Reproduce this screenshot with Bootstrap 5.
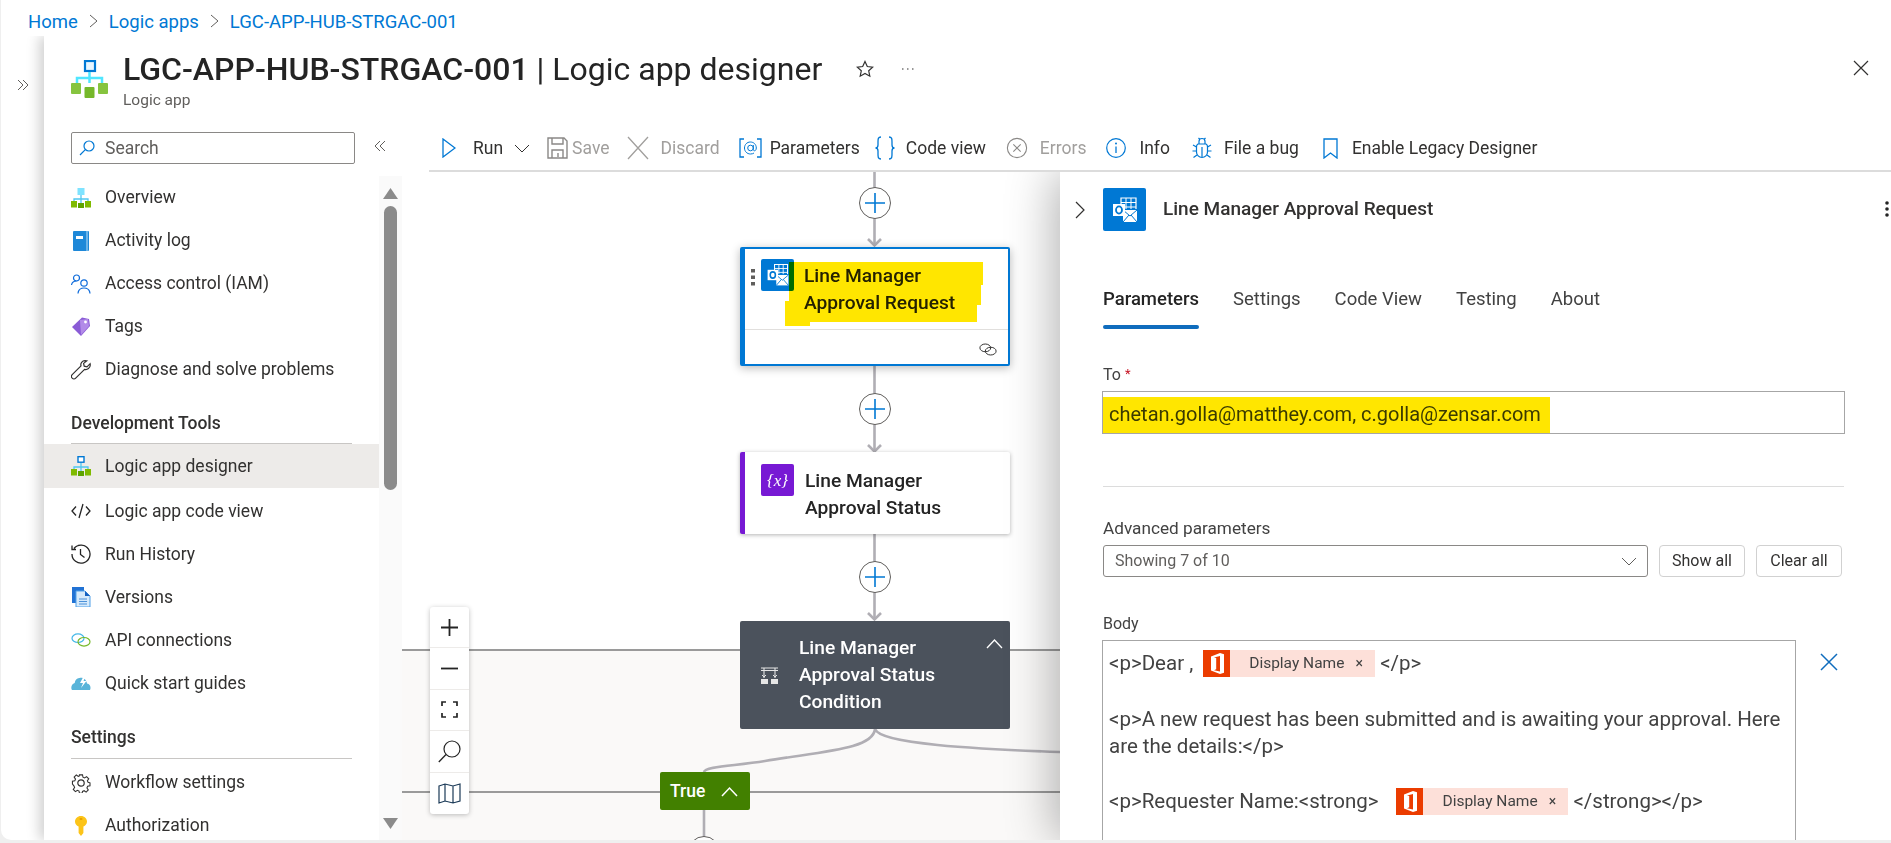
<!DOCTYPE html>
<html lang="en">
<head>
  <title>Logic app designer</title>
  <meta charset="utf-8">
  <meta name="viewport" content="width=device-width, initial-scale=1">
  <link href="https://cdn.jsdelivr.net/npm/bootstrap@5.3.3/dist/css/bootstrap.min.css" rel="stylesheet">
  <script src="https://cdn.jsdelivr.net/npm/bootstrap@5.3.3/dist/js/bootstrap.bundle.min.js"></script>
  <style>
      html, body { height: 100%; overflow: hidden; }
      body { background: #efefef; font-family: Roboto, "Liberation Sans", sans-serif; font-size: 18px; color: #323130; }
      svg { display: block; flex: none; }
      .shell { height: 840px; margin-left: 1px; background: #fff; border-bottom-left-radius: 10px; overflow: hidden; }
      .crumbs { height: 36px; padding-left: 27px; flex: none; }
      .crumbs .breadcrumb { --bs-breadcrumb-divider: url("data:image/svg+xml,%3Csvg xmlns='http://www.w3.org/2000/svg' width='9' height='14'%3E%3Cpath d='M1 1l7 6-7 6' fill='none' stroke='%23605e5c'/%3E%3C/svg%3E"); --bs-breadcrumb-item-padding-x: 11px; font-size: 18.5px; line-height: 44px; margin: 0; }
      .crumbs .breadcrumb-item { display: flex; align-items: center; }
      .crumbs a { color: #0078d4; text-decoration: none; }
      .gutter { width: 43px; flex: none; padding: 43px 0 0 16px; }
      .blade { box-shadow: -5px 0 12px rgba(0,0,0,.18); clip-path: inset(0 0 0 -20px); min-width: 0; }
      .blade-head { height: 96px; flex: none; padding: 24px 22px 0 27px; }
      .head-text { margin-left: 15px; margin-top: -11px; }
      .blade-title { font-size: 32px; line-height: 40px; margin: 0; font-weight: 400; color: #242424; white-space: nowrap; }
      .blade-title b { font-weight: 500; }
      .blade-sub { font-size: 15.5px; line-height: 22px; margin-top: 0; color: #605e5c; }
      .head-star { margin: 0 0 0 34px; }
      .head-dots { margin: 6px 0 0 27px; }
      .head-close { margin: 0 0 0 auto; }
      .side { width: 358px; flex: none; }
      .searchrow { height: 44px; flex: none; padding-left: 27px; }
      .searchbox { width: 284px; position: relative; }
      .searchbox svg { position: absolute; left: 8px; top: 8px; }
      .searchbox input { height: 32px; border: 1px solid #8a8886; border-radius: 2px; padding: 0 0 0 33px; font-size: 17.5px; color: #605e5c; }
      .searchbox input::placeholder { color: #605e5c; opacity: 1; }
      .collapse-ico { margin: 8px 16px 0 auto; }
      .side-menu { width: 335px; flex: none; padding-top: 0; }
      .side-link { height: 43px; flex: none; padding: 0 0 0 27px; gap: 14px; color: #323130; font-size: 17.5px; white-space: nowrap; }
      .side-link:hover { color: #323130; }
      .side-link.current { background: #edebe9; height: 44px; margin-bottom: 1.5px; }
      .side-head { height: 53px; flex: none; margin: 0 27px; padding-top: 21px; border-bottom: 1px solid #c8c6c4; font-size: 17.5px; font-weight: 500; line-height: 22px; }
      .side-head-late { height: 54px; padding-top: 21px; margin-bottom: 2.5px; }
      .scrolltrack { width: 23px; flex: none; background: #fafafa; padding-top: 12px; }
      .thumb { width: 13px; margin: 7px 0 0 5px; height: 284px; background: #8b8b8b; border-radius: 7px; }
      .arrow-up, .arrow-down { width: 15px; height: 11px; margin-left: 4px; background: #8b8b8b; }
      .arrow-up { clip-path: polygon(50% 0, 100% 100%, 0 100%); }
      .arrow-down { clip-path: polygon(0 0, 100% 0, 50% 100%); margin-bottom: 11px; }
      .toolbar { height: 40px; flex: none; margin-left: 27px; padding: 0 0 6px 13px; border-bottom: 2px solid #dcdcdc; font-size: 17.5px; white-space: nowrap; }
      .tool { gap: 9px; color: #323130; }
      .tool.off { color: #a19f9d; }
      .canvas { width: 658px; flex: none; position: relative; overflow: hidden; background: #fff; }
      .scope-bg { position: absolute; left: 0; right: 0; top: 477px; bottom: 0; background: #faf9f8; border-top: 2px solid #9a9a9a; }
      .scope-line { position: absolute; left: 0; right: 0; top: 619px; height: 2px; background: #9a9a9a; }
      .wire { position: absolute; left: 0; top: 0; }
      .add { position: absolute; left: 457px; width: 32px; height: 32px; border-radius: 50%; border: 1px solid #605e5c; background: #fff; display: flex; align-items: center; justify-content: center; }
      .node { position: absolute; left: 338px; width: 270px; background: #fff; box-shadow: 0 1px 4px rgba(0,0,0,.3); border-radius: 2px; font-size: 19.2px; line-height: 27px; color: #242424; }
      .node-title { position: absolute; left: 65px; top: 15px; font-weight: 500; white-space: nowrap; }
      .node-ico { position: absolute; left: 21px; top: 12px; width: 33px; height: 32px; border-radius: 2px; display: flex; align-items: center; justify-content: center; }
      .mail-bg { background: #0078d4; }
      .node-active { top: 75px; height: 119px; border: 2px solid #0078d4; border-left-width: 5px; box-shadow: 0 2px 10px rgba(0,0,0,.28); }
      .node-active .node-ico { left: 16px; top: 10px; }
      .node-active .node-title { left: 59px; top: 13px; }
      .kebab { position: absolute; left: 6px; top: 20px; }
      .node-foot { position: absolute; left: 0; right: 0; top: 80px; border-top: 1px solid #e1dfdd; }
      .link-ico { position: absolute; right: 11px; top: 94px; }
      .marker { position: absolute; left: 383px; top: 90px; width: 204px; height: 64px; background: #ffe600; mix-blend-mode: multiply; clip-path: polygon(4px 0, 198px 0, 198px 23px, 196px 23px, 196px 43px, 192px 43px, 192px 60px, 25px 60px, 25px 64px, 0 64px, 0 39px, 4px 39px); }
      .node-var { top: 280px; height: 82px; border-left: 5px solid #7719d4; }
      .node-var .node-ico { left: 16px; }
      .node-var .node-title { left: 60px; }
      .var-bg { background: #7719d4; color: #fff; font-family: "Liberation Serif", serif; font-style: italic; font-size: 17px; }
      .node-cond { top: 449px; height: 108px; background: #4b525c; color: #fff; box-shadow: none; }
      .node-cond svg.cond-ico { position: absolute; left: 21px; top: 46px; }
      .node-cond svg.cond-up { position: absolute; right: 7px; top: 17px; }
      .node-cond .node-title { left: 59px; top: 13px; }
      .node-true { position: absolute; left: 258px; top: 600px; width: 90px; height: 38px; background: #428000; color: #fff; border-radius: 2px; font-size: 17.5px; font-weight: 500; padding-left: 10px; gap: 16px; }
      .zoomer { position: absolute; left: 28px; top: 435px; width: 39px; background: #fff; border-radius: 3px; box-shadow: 0 1px 5px rgba(0,0,0,.25); }
      .zoomer div { height: 41.4px; display: flex; align-items: center; justify-content: center; border-bottom: 1px solid #edebe9; }
      .zoomer div:last-child { border-bottom: 0; }
      .pane { min-width: 0; background: #fff; box-shadow: -6px 0 45px rgba(0,0,0,.3); position: relative; }
      .pane-head { height: 43px; margin-top: 16px; position: relative; padding-left: 43px; }
      .pane-back { position: absolute; left: 15px; top: 13px; }
      .pane-kebab { position: absolute; right: 2px; top: 13px; }
      .pane-ico { width: 43px; height: 43px; border-radius: 2px; margin-right: 17px; display: flex; align-items: center; justify-content: center; }
      .pane-title { font-size: 19px; font-weight: 500; }
      .pane-body { padding-left: 42px; }
      .pane-tabs { gap: 34px; margin-top: 54px; height: 44px; margin-left: 1px; }
      .pane-tab { padding: 0 0 16px; font-size: 18.5px; color: #424242; line-height: 28px; }
      .pane-tab:hover { color: #424242; }
      .pane-tab.active { color: #242424; font-weight: 500; position: relative; }
      .pane-tab.active::after { content: ""; position: absolute; left: 0; right: 0; bottom: 0; height: 4px; border-radius: 2px; background: #0f6cbd; }
      .field-label { font-size: 16px; line-height: 22px; color: #424242; margin-left: 1px; }
      .field-label i { color: #c50f1f; font-style: normal; font-size: 13px; vertical-align: 2px; }
      .field-wide { font-size: 17.2px; }
      .to-box { width: 743px; height: 43px; border: 1px solid #a6a6a6; margin-top: 5px; }
      .to-mark { width: 447px; height: 36px; background: #ffe600; padding-left: 6px; line-height: 34px; font-size: 20px; color: #3a3a00; white-space: nowrap; }
      .rule { width: 741px; margin: 52px 0 0 1px; border-top: 1px solid #dcdcdc; opacity: 1; }
      .adv-select { width: 545px; height: 32px; border: 1px solid #8a8886; border-radius: 3px; padding: 0 10px 0 11px; font-size: 16px; color: #605e5c; margin-left: 1px; }
      .adv-btn { width: 86px; height: 32px; padding: 0; font-size: 16px; line-height: 28px; color: #323130; border: 1px solid #d1d1d1; border-radius: 4px; background: #fff; }
      .body-box { width: 694px; height: 215px; border: 1px solid #a6a6a6; padding: 9px 0 0 6px; font-size: 20.5px; color: #424242; white-space: nowrap; }
      .body-line { line-height: 27px; height: 27px; display: flex; align-items: center; }
      .body-gap { height: 29px; }
      .body-gap-late { height: 28px; }
      .token { display: inline-flex; align-items: center; width: 172px; height: 27px; background: #fde0d9; font-size: 15.5px; color: #424242; margin: 0 5px 0 10px; flex: none; }
      .token-late { margin-left: 18px; }
      .token-ico { width: 27px; height: 27px; background: #eb3c00; display: flex; align-items: center; justify-content: center; margin-right: 19px; }
      .token em { font-style: normal; margin-left: 11px; font-size: 14px; }
  </style>
</head>
<body>
<svg width="0" height="0" class="position-absolute">
  <defs>
    <symbol id="mail" viewBox="0 0 30 30">
      <path d="M11 3h15v14H11z" fill="none" stroke="#fff" stroke-width="1.2"/>
      <path d="M11 7.5h15M11 12h15M16 3v14M21 3v14" stroke="#fff" stroke-width="1"/>
      <path d="M13 14h14v13H13z" fill="#0078d4"/>
      <path d="M13 15l14 0v12H13z" fill="#fff"/>
      <path d="M13 15l7 6 7-6M13 27l6-7M27 27l-6-7" fill="none" stroke="#0078d4" stroke-width="1"/>
      <rect x="3" y="9" width="12" height="12" fill="#fff"/>
      <ellipse cx="9" cy="15" rx="3" ry="3.6" fill="none" stroke="#0078d4" stroke-width="1.8"/>
    </symbol>
    <symbol id="office" viewBox="0 0 27 27">
      <path d="M17 3L8 6.500V20.500L17 24l4-1.200V4.200zM17 6v15.500l-6-1.200 2.200-1V8l-2.200 -.6z" fill="#fff" fill-rule="evenodd"/>
    </symbol>
    <symbol id="chain" viewBox="0 0 20 14">
      <ellipse cx="7" cy="5.200" rx="6" ry="4.300" fill="none" stroke="#323130" stroke-width="1.100"/>
      <ellipse cx="13" cy="8.800" rx="6" ry="4.300" fill="none" stroke="#323130" stroke-width="1.100"/>
    </symbol>
    <symbol id="plusblue" viewBox="0 0 20 20">
      <path d="M10 0v20M0 10h20" stroke="#0078d4" stroke-width="1.600"/>
    </symbol>
    <symbol id="tree" viewBox="0 0 20 20">
      <path d="M10 7v4M3 14v-3h14v3M10 11v4" fill="none" stroke="#50c8f0" stroke-width="1.300"/>
      <rect y="13" width="6" height="6.500" fill="#7fba00"/><rect x="14" y="13" width="6" height="6.500" fill="#7fba00"/><rect x="7" y="15" width="6" height="5" fill="#5ea400"/>
    </symbol>
    <symbol id="docx" viewBox="0 0 24 24">
      <circle cx="12" cy="12" r="10.500" fill="none" stroke="currentColor" stroke-width="1.200"/>
      <path d="M8 8l8 8M16 8l-8 8" stroke="currentColor" stroke-width="1.200"/>
    </symbol>
  </defs>
</svg>

<div class="shell d-flex flex-column">
  <nav class="crumbs" aria-label="breadcrumb">
    <ol class="breadcrumb">
      <li class="breadcrumb-item"><a href="#">Home</a></li>
      <li class="breadcrumb-item"><a href="#">Logic apps</a></li>
      <li class="breadcrumb-item"><a href="#">LGC-APP-HUB-STRGAC-001</a></li>
    </ol>
  </nav>

  <div class="d-flex flex-grow-1" style="min-height:0">
    <div class="gutter">
      <svg width="13" height="12" viewBox="0 0 13 12"><path d="M1 1l5 5-5 5M6 1l5 5-5 5" fill="none" stroke="#605e5c"/></svg>
    </div>

    <div class="blade flex-grow-1 d-flex flex-column">
      <header class="blade-head d-flex align-items-start">
        <svg width="37" height="38" viewBox="0 0 37 38">
          <rect x="14" y="1" width="10" height="10" fill="#e8f6ff" stroke="#0078d4" stroke-width="2.200"/>
          <path d="M18.500 12v11M6 23v-5h25v5" fill="none" stroke="#50e6ff" stroke-width="2.500"/>
          <rect x="0" y="23" width="10" height="11" rx="1" fill="#86c43f"/><rect x="27" y="23" width="10" height="11" rx="1" fill="#86c43f"/><rect x="13.500" y="27" width="10" height="11" rx="1" fill="#76b82a"/>
        </svg>
        <div class="head-text">
          <h1 class="blade-title"><b>LGC-APP-HUB-STRGAC-001</b> | Logic app designer</h1>
          <div class="blade-sub">Logic app</div>
        </div>
        <svg class="head-star" width="18" height="18" viewBox="0 0 18 18"><path d="M9 1.500l2.300 5 5.400.6-4 3.700 1.100 5.400L9 13.500l-4.800 2.700 1.100-5.400-4-3.700 5.400-.6z" fill="none" stroke="#323130" stroke-width="1.200"/></svg>
        <svg class="head-dots" width="14" height="6" viewBox="0 0 14 6"><path d="M1 3h1.500M6 3h1.500M11 3h1.500" stroke="#323130" stroke-width="1.200"/></svg>
        <svg class="head-close" width="16" height="16" viewBox="0 0 16 16"><path d="M1 1l14 14M15 1L1 15" stroke="#323130" stroke-width="1.200"/></svg>
      </header>

      <div class="d-flex flex-grow-1" style="min-height:0">
        <aside class="side d-flex flex-column">
          <div class="searchrow d-flex">
            <div class="searchbox">
              <svg width="16" height="16" viewBox="0 0 16 16"><circle cx="10" cy="6" r="5" fill="none" stroke="#0078d4" stroke-width="1.200"/><path d="M6.300 9.700L1 15" stroke="#0078d4" stroke-width="1.200"/></svg>
              <input class="form-control" placeholder="Search">
            </div>
            <svg class="collapse-ico" width="13" height="12" viewBox="0 0 13 12"><path d="M12 1L7 6l5 5M7 1L2 6l5 5" fill="none" stroke="#605e5c"/></svg>
          </div>
          <div class="d-flex flex-grow-1" style="min-height:0">
            <nav class="side-menu nav flex-column flex-nowrap overflow-hidden">
              <a class="side-link nav-link d-flex align-items-center" href="#">
                <svg width="20" height="20" viewBox="0 0 20 20"><rect x="6.500" y="0" width="7" height="7" fill="#7fe3ff"/><use href="#tree"/></svg>Overview</a>
              <a class="side-link nav-link d-flex align-items-center" href="#">
                <svg width="20" height="20" viewBox="0 0 20 20"><rect x="2" y="0" width="16" height="20" rx="1" fill="#1e88d8"/><path d="M16 0v20" stroke="#bfe0f7" stroke-width="1"/><rect x="5" y="5" width="7" height="3" fill="#fff"/></svg>Activity log</a>
              <a class="side-link nav-link d-flex align-items-center" href="#">
                <svg width="20" height="20" viewBox="0 0 20 20"><g fill="none" stroke="#0f6cdb" stroke-width="1.200"><circle cx="5.500" cy="4" r="3"/><path d="M.500 11c.5-3 2.500-4 5-4"/><circle cx="13" cy="9" r="3.200"/><path d="M7 19.500c.3-3.500 2.500-5.500 6-5.500s5.700 2 6 5.500"/></g></svg>Access control (IAM)</a>
              <a class="side-link nav-link d-flex align-items-center" href="#">
                <svg width="20" height="20" viewBox="0 0 20 20"><path d="M11 .500l7 1.500 1 7-9 10-9-9z" fill="#8a5bd6"/><path d="M9 3l8-1 1 7-8 9z" fill="#b28be8"/><circle cx="14.500" cy="5" r="1.400" fill="#fff"/></svg>Tags</a>
              <a class="side-link nav-link d-flex align-items-center" href="#">
                <svg width="20" height="20" viewBox="0 0 20 20"><path d="M14 .700c-2.800 0-4.800 2.500-4 5.200L1.200 14.700c-1 1-1 2.500 0 3.500s2.500 1 3.500 0L13.600 9.400c2.800.7 5.600-1.500 5.700-4.400l-.2-1.300L16 6.800l-2.800-.6-.6-2.800L15.700.9z" fill="none" stroke="#323130" stroke-width="1.200"/></svg>Diagnose and solve problems</a>

              <div class="side-head">Development Tools</div>

              <a class="side-link nav-link current d-flex align-items-center" href="#">
                <svg width="20" height="20" viewBox="0 0 20 20"><rect x="7" y="0.700" width="6" height="5.500" fill="#fff" stroke="#0078d4" stroke-width="1.400"/><use href="#tree"/></svg>Logic app designer</a>
              <a class="side-link nav-link d-flex align-items-center" href="#">
                <svg width="20" height="20" viewBox="0 0 20 20"><path d="M5 5.500L1 10l4 4.500M15 5.500l4 4.500-4 4.500M12 3L8 17" fill="none" stroke="#242424" stroke-width="1.300"/></svg>Logic app code view</a>
              <a class="side-link nav-link d-flex align-items-center" href="#">
                <svg width="20" height="20" viewBox="0 0 20 20"><path d="M3 4.500A9 9 0 1 1 1 10M1 1.500v4h4M9.500 5v5.500l4 3" fill="none" stroke="#242424" stroke-width="1.300"/></svg>Run History</a>
              <a class="side-link nav-link d-flex align-items-center" href="#">
                <svg width="20" height="20" viewBox="0 0 20 20"><path d="M1 0h12v16H1z" fill="#2172d4"/><path d="M5 4h9l5 5v11H5z" fill="#d6eafb" stroke="#50a0e8"/><path d="M14 4v5h5z" fill="#1460c0"/><path d="M8 12h8M8 14.500h8M8 17h8" stroke="#4a90d9"/></svg>Versions</a>
              <a class="side-link nav-link d-flex align-items-center" href="#">
                <svg width="20" height="14" viewBox="0 0 20 14"><ellipse cx="7" cy="5.200" rx="6" ry="4.300" fill="none" stroke="#45b8e8" stroke-width="1.200"/><ellipse cx="13" cy="8.800" rx="6" ry="4.300" fill="none" stroke="#76b82a" stroke-width="1.200"/></svg>API connections</a>
              <a class="side-link nav-link d-flex align-items-center" href="#">
                <svg width="20" height="14" viewBox="0 0 20 14"><path d="M1 14h18c1.200-2.500.3-6-3-6.500C15.500 3.500 12 1 8.500 2 6 1.800 4 4 3.700 7 .7 8-.6 11.500 1 14z" fill="#59b4d9"/><path d="M12.500.500L9 7h3l-2 5 5.500-7h-3l2-4.500z" fill="#fff"/></svg>Quick start guides</a>

              <div class="side-head side-head-late">Settings</div>

              <a class="side-link nav-link d-flex align-items-center" href="#">
                <svg width="20" height="20" viewBox="0 0 20 20"><path d="M8.300 1h3.400l.5 2.600 1.800.8 2.200-1.500 2.400 2.400-1.500 2.200.8 1.800 2.100.5v3.400l-2.600.5-.8 1.800 1.500 2.200-2.400 2.400-2.200-1.500-1.800.8-.5 2.100H8.300l-.5-2.600-1.800-.8-2.200 1.500-2.400-2.400 1.500-2.200-.8-1.800L.5 11.300V8l2.600-.5.800-1.800L2.400 3.500 4.800 1.100 7 2.600l1-.4z" transform="translate(1 1) scale(.9)" fill="none" stroke="#323130" stroke-width="1.200"/><circle cx="10" cy="10" r="3.200" fill="none" stroke="#323130" stroke-width="1.200"/></svg>Workflow settings</a>
              <a class="side-link nav-link d-flex align-items-center" href="#">
                <svg width="20" height="20" viewBox="0 0 20 20"><path d="M10 0c3.500 0 6 2.600 6 5.500 0 2.400-1.500 4.200-3.600 5V17l-2.400 3-2.400-3v-6.500C5.500 9.700 4 7.900 4 5.500 4 2.600 6.500 0 10 0z" fill="#fcc419"/><rect x="8.500" y="2" width="3" height="2" rx="1" fill="#e8a200"/></svg>Authorization</a>
            </nav>
            <div class="scrolltrack d-flex flex-column">
              <div class="arrow-up"></div>
              <div class="thumb"></div>
              <div class="arrow-down mt-auto"></div>
            </div>
          </div>
        </aside>

        <main class="flex-grow-1 d-flex flex-column" style="min-width:0">
          <div class="toolbar d-flex align-items-center">
            <div class="tool d-flex align-items-center"><svg width="14" height="20" viewBox="0 0 14 20"><path d="M1 1v18l12-9z" fill="none" stroke="#0078d4" stroke-width="1.300"/></svg><span class="ms-2">Run</span><svg style="margin-left:2px" width="16" height="9" viewBox="0 0 16 9"><path d="M1 1l7 7 7-7" fill="none" stroke="#323130"/></svg></div>
            <div class="tool off d-flex align-items-center" style="margin-left:17px;gap:4px"><svg width="21" height="22" viewBox="0 0 21 22"><path d="M1 1h16l3 3v17H1z" fill="none" stroke="#8a8886" stroke-width="1.400"/><path d="M5 1v6h11V1M5 21v-8h11v8M11 16v4" fill="none" stroke="#8a8886" stroke-width="1.400"/></svg>Save</div>
            <div class="tool off d-flex align-items-center" style="margin-left:17px;gap:12px"><svg width="22" height="24" viewBox="0 0 22 24"><path d="M1 1l20 22M21 1L1 23" stroke="#a19f9d" stroke-width="1.300"/></svg>Discard</div>
            <div class="tool d-flex align-items-center" style="margin-left:19px;gap:8px"><svg width="23" height="20" viewBox="0 0 23 20"><path d="M5 1H1v18h4M18 1h4v18h-4" fill="none" stroke="#0078d4" stroke-width="1.300"/><circle cx="11.500" cy="10" r="2.800" fill="none" stroke="#0078d4"/><path d="M14.300 7v4.500c0 2 3 1.800 3-1.500 0-3.500-2.500-6-6-6-3.300 0-5.800 2.600-5.800 6s2.500 6 6 6c1.400 0 2.500-.3 3.500-1" fill="none" stroke="#0078d4"/></svg>Parameters</div>
            <div class="tool d-flex align-items-center" style="margin-left:15px;gap:11px"><svg width="20" height="24" viewBox="0 0 20 24"><path d="M6 1C3 1 3 3 3 6v3c0 2-1 3-2.500 3C2 12 3 13 3 15v3c0 3 0 5 3 5M14 1c3 0 3 2 3 5v3c0 2 1 3 2.500 3-1.500 0-2.500 1-2.500 3v3c0 3 0 5-3 5" fill="none" stroke="#0078d4" stroke-width="1.300"/></svg>Code view</div>
            <div class="tool off d-flex align-items-center" style="margin-left:20px;gap:12px"><svg width="22" height="22" viewBox="0 0 24 24" style="color:#8a8886"><use href="#docx"/></svg>Errors</div>
            <div class="tool d-flex align-items-center" style="margin-left:20px;gap:13px"><svg width="20" height="22" viewBox="0 0 20 22"><circle cx="10" cy="11" r="9.300" fill="none" stroke="#0078d4" stroke-width="1.200"/><path d="M10 9.500V16" stroke="#0078d4" stroke-width="1.300"/><circle cx="10" cy="6.500" r="1" fill="#0078d4"/></svg>Info</div>
            <div class="tool d-flex align-items-center" style="margin-left:22px;gap:12px"><svg width="20" height="22" viewBox="0 0 20 22"><g fill="none" stroke="#0078d4" stroke-width="1.200"><path d="M6 7h8a3 3 0 0 1 1.500 3v5a5.500 5.500 0 0 1-11 0v-5A3 3 0 0 1 6 7z"/><path d="M7 7V4.500a3 3 0 0 1 6 0V7M6.500 1l1.500 1.500M13.500 1L12 2.500M4.500 10L1 8M15.500 10L19 8M4.500 14H.5M15.500 14h4M5 18l-3.500 2.500M15 18l3.500 2.500M10 10v10"/></g></svg>File a bug</div>
            <div class="tool d-flex align-items-center" style="margin-left:23px;gap:13px"><svg width="17" height="21" viewBox="0 0 17 21"><path d="M2 1h13v19l-6.500-5L2 20z" fill="none" stroke="#0078d4" stroke-width="1.300"/></svg>Enable Legacy Designer</div>
          </div>

          <div class="d-flex flex-grow-1 overflow-hidden" style="min-height:0">
            <section class="canvas">
              <div class="scope-bg"></div>
              <div class="scope-line"></div>
              <svg class="wire" width="658" height="668" viewBox="0 0 658 668">
                <g fill="none" stroke="#b0aeb4" stroke-width="2.600">
                  <path d="M472.500 0v74M472.500 194v86M472.500 362v86"/>
                  <path d="M466 67l6.500 6.500L479 67M466 273l6.500 6.500L479 273M466 441l6.500 6.500L479 441"/>
                  <path d="M473 557c-2 20-50 22-110 32-30 5-60 5-61 11M473 557c5 15 100 20 185 23"/>
                  <path d="M302 638v30"/>
                </g>
              </svg>

              <div class="add" style="top:15px"><svg width="20" height="20"><use href="#plusblue"/></svg></div>
              <div class="add" style="top:221px"><svg width="20" height="20"><use href="#plusblue"/></svg></div>
              <div class="add" style="top:389px"><svg width="20" height="20"><use href="#plusblue"/></svg></div>
              <div class="add" style="top:664px;left:286px"></div>

              <div class="node node-active">
                <svg class="kebab" width="5" height="17" viewBox="0 0 5 17"><g fill="#605e5c"><rect x="0" y="0" width="4" height="3.500"/><rect x="0" y="6.500" width="4" height="3.500"/><rect x="0" y="13" width="4" height="3.500"/></g></svg>
                <div class="node-ico mail-bg"><svg width="26" height="26"><use href="#mail"/></svg></div>
                <div class="node-title">Line Manager<br>Approval Request</div>
                <div class="node-foot"></div>
                <svg class="link-ico" width="18" height="13"><use href="#chain"/></svg>
              </div>
              <div class="marker"></div>

              <div class="node node-var">
                <div class="node-ico var-bg">{<span>x</span>}</div>
                <div class="node-title">Line Manager<br>Approval Status</div>
              </div>

              <div class="node node-cond">
                <svg class="cond-ico" width="17" height="17" viewBox="0 0 17 17"><path d="M0 1h17M3 1v10M14 1v10M0 3.500h17" fill="none" stroke="#e6e6e6" stroke-width="1.100"/><path d="M0 12h7v5H0zM10 12h7v5h-7z" fill="#e6e6e6"/><path d="M1 8l2 2 2-2M12 8l2 2 2-2" fill="none" stroke="#e6e6e6"/></svg>
                <div class="node-title">Line Manager<br>Approval Status<br>Condition</div>
                <svg class="cond-up" width="17" height="11" viewBox="0 0 17 11"><path d="M1 10l7.500-8 7.500 8" fill="none" stroke="#fff" stroke-width="1.300"/></svg>
              </div>

              <div class="node-true d-flex align-items-center">True<svg width="17" height="11" viewBox="0 0 17 11"><path d="M1 10l7.500-8 7.500 8" fill="none" stroke="#fff" stroke-width="1.500"/></svg></div>

              <div class="zoomer">
                <div><svg width="17" height="17" viewBox="0 0 17 17"><path d="M8.500 0v17M0 8.500h17" stroke="#242424" stroke-width="1.800"/></svg></div>
                <div><svg width="17" height="3" viewBox="0 0 17 3"><path d="M0 1.500h17" stroke="#242424" stroke-width="1.800"/></svg></div>
                <div><svg width="17" height="17" viewBox="0 0 17 17"><path d="M1 5V1h4M12 1h4v4M16 12v4h-4M5 16H1v-4" fill="none" stroke="#242424" stroke-width="1.700"/></svg></div>
                <div><svg width="23" height="23" viewBox="0 0 23 23"><circle cx="14" cy="9" r="8" fill="none" stroke="#242424" stroke-width="1.200"/><path d="M8 14.500L.8 22" stroke="#242424" stroke-width="1.300"/></svg></div>
                <div><svg width="23" height="21" viewBox="0 0 23 21"><path d="M1 3l6-2 8 2 7-2v17l-7 2-8-2-6 2zM7 1v17M15 3v17" fill="none" stroke="#1b3a57" stroke-width="1.200"/></svg></div>
              </div>
            </section>

            <section class="pane flex-grow-1">
              <div class="pane-head d-flex align-items-center">
                <svg class="pane-back" width="11" height="18" viewBox="0 0 11 18"><path d="M1 1l8 8-8 8" fill="none" stroke="#323130" stroke-width="1.200"/></svg>
                <div class="pane-ico mail-bg"><svg width="30" height="30"><use href="#mail"/></svg></div>
                <div class="pane-title">Line Manager Approval Request</div>
                <svg class="pane-kebab" width="4" height="16" viewBox="0 0 4 16"><g fill="#242424"><circle cx="2" cy="2" r="1.800"/><circle cx="2" cy="8" r="1.800"/><circle cx="2" cy="14" r="1.800"/></g></svg>
              </div>
              <div class="pane-body">
                <nav class="pane-tabs nav flex-nowrap">
                  <a class="pane-tab nav-link active" href="#">Parameters</a>
                  <a class="pane-tab nav-link" href="#">Settings</a>
                  <a class="pane-tab nav-link" href="#">Code View</a>
                  <a class="pane-tab nav-link" href="#">Testing</a>
                  <a class="pane-tab nav-link" href="#">About</a>
                </nav>
                <div class="field-label" style="margin-top:34px">To <i>*</i></div>
                <div class="to-box d-flex align-items-end"><div class="to-mark">chetan.golla@matthey.com, c.golla@zensar.com</div></div>
                <hr class="rule">
                <div class="field-label field-wide" style="margin-top:30px">Advanced parameters</div>
                <div class="d-flex" style="gap:11px;margin-top:6px">
                  <div class="adv-select d-flex align-items-center justify-content-between">Showing 7 of 10<svg width="16" height="9" viewBox="0 0 16 9"><path d="M1 1l7 7 7-7" fill="none" stroke="#605e5c"/></svg></div>
                  <button class="btn adv-btn" type="button">Show all</button>
                  <button class="btn adv-btn" type="button">Clear all</button>
                </div>
                <div class="field-label" style="margin-top:36px">Body</div>
                <div class="d-flex" style="margin-top:5px">
                  <div class="body-box">
                    <div class="body-line">&lt;p&gt;Dear ,<span class="token"><span class="token-ico"><svg width="27" height="27"><use href="#office"/></svg></span>Display Name<em>×</em></span>&lt;/p&gt;</div>
                    <div class="body-gap"></div>
                    <div class="body-line">&lt;p&gt;A new request has been submitted and is awaiting your approval. Here</div>
                    <div class="body-line">are the details:&lt;/p&gt;</div>
                    <div class="body-gap-late"></div>
                    <div class="body-line">&lt;p&gt;Requester Name:&lt;strong&gt;<span class="token token-late"><span class="token-ico"><svg width="27" height="27"><use href="#office"/></svg></span>Display Name<em>×</em></span>&lt;/strong&gt;&lt;/p&gt;</div>
                  </div>
                  <svg class="ms-4" style="margin-top:13px" width="18" height="18" viewBox="0 0 18 18"><path d="M1 1l16 16M17 1L1 17" stroke="#0f6cbd" stroke-width="1.500"/></svg>
                </div>
              </div>
            </section>
          </div>
        </main>
      </div>
    </div>
  </div>
</div>
</body>
</html>
